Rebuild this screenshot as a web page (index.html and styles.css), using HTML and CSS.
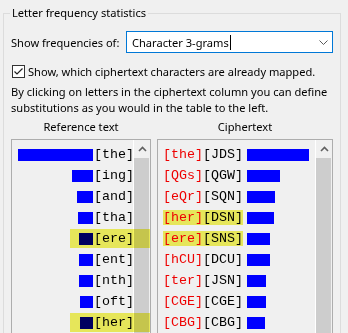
FILE: index.html
```html
<!DOCTYPE html>
<html>
<head>
<meta charset="utf-8">
<link rel="stylesheet" href="styles.css">
</head>
<body>
<fieldset class="group">
  <legend class="group-title">Letter frequency statistics</legend>
  <div class="freq">
    <span class="freq-label">Show frequencies of:</span>
    <div class="combo">
      <span class="combo-value">Character 3-grams</span><span class="caret"></span>
      <svg class="combo-arrow" width="9" height="5" viewBox="0 0 9 5"><polyline points="0.5,0.5 4.5,4.5 8.5,0.5" fill="none" stroke="#5a5a5a" stroke-width="1"/></svg>
    </div>
  </div>
  <div class="check">
    <span class="check-box"><svg width="11" height="11" viewBox="0 0 11 11"><polyline points="1.5,5.5 4,8 9.5,2.5" fill="none" stroke="#222" stroke-width="1.2"/></svg></span>
    <span class="check-label">Show, which ciphertext characters are already mapped.</span>
  </div>
  <p class="desc">By clicking on letters in the ciphertext column you can define substitutions as you would in the table to the left.</p>
  <div class="lists">
    <div class="pane pane-ref">
      <div class="pane-title">Reference text</div>
      <div class="list">
        <div class="rows rows-ref">
          <div class="row"><span class="bar" style="width:75px"></span><span class="txt">[the]</span></div>
          <div class="row"><span class="bar" style="width:21px"></span><span class="txt">[ing]</span></div>
          <div class="row"><span class="bar" style="width:16px"></span><span class="txt">[and]</span></div>
          <div class="row"><span class="bar" style="width:15px"></span><span class="txt">[tha]</span></div>
          <div class="row"><span class="bar" style="width:14px"></span><span class="txt">[ere]</span><span class="mark"></span></div>
          <div class="row"><span class="bar" style="width:14px"></span><span class="txt">[ent]</span></div>
          <div class="row"><span class="bar" style="width:14px"></span><span class="txt">[nth]</span></div>
          <div class="row"><span class="bar" style="width:13px"></span><span class="txt">[oft]</span></div>
          <div class="row"><span class="bar" style="width:13px"></span><span class="txt">[her]</span><span class="mark"></span></div>
        </div>
        <div class="sbar">
          <div class="sbtn"><svg width="9" height="6" viewBox="0 0 9 6"><polyline points="1,5 4.5,1.5 8,5" fill="none" stroke="#606060" stroke-width="1.6"/></svg></div>
          <div class="thumb"></div>
        </div>
      </div>
    </div>
    <div class="pane pane-cipher">
      <div class="pane-title">Ciphertext</div>
      <div class="list">
        <div class="rows rows-cipher">
          <div class="row"><span class="txt"><span class="plain">[the]</span>[JDS]</span><span class="bar" style="width:62px"></span></div>
          <div class="row"><span class="txt"><span class="plain">[QGs]</span>[QGW]</span><span class="bar" style="width:33px"></span></div>
          <div class="row"><span class="txt"><span class="plain">[eQr]</span>[SQN]</span><span class="bar" style="width:28px"></span></div>
          <div class="row"><span class="txt txt-marked"><span class="plain">[her]</span>[DSN]</span><span class="bar" style="width:27px"></span></div>
          <div class="row"><span class="txt txt-marked"><span class="plain">[ere]</span>[SNS]</span><span class="bar" style="width:23px"></span></div>
          <div class="row"><span class="txt"><span class="plain">[hCU]</span>[DCU]</span><span class="bar" style="width:23px"></span></div>
          <div class="row"><span class="txt"><span class="plain">[ter]</span>[JSN]</span><span class="bar" style="width:19px"></span></div>
          <div class="row"><span class="txt"><span class="plain">[CGE]</span>[CGE]</span><span class="bar" style="width:19px"></span></div>
          <div class="row"><span class="txt"><span class="plain">[CBG]</span>[CBG]</span><span class="bar" style="width:18px"></span></div>
        </div>
        <div class="sbar">
          <div class="sbtn"><svg width="9" height="6" viewBox="0 0 9 6"><polyline points="1,5 4.5,1.5 8,5" fill="none" stroke="#606060" stroke-width="1.6"/></svg></div>
          <div class="thumb"></div>
        </div>
      </div>
    </div>
  </div>
</fieldset>
</body>
</html>
```

FILE: styles.css
```css
html, body {
  margin: 0;
}
body {
  background: #f0f0f0;
  width: 348px;
  height: 333px;
  overflow: hidden;
  padding-top: 5px;
  box-sizing: border-box;
  font-family: "Noto Sans", sans-serif;
  font-size: 11.1px;
  color: #000;
}
.group {
  margin: 0 7px 0 3px;
  border: 1px solid #dcdcdc;
  padding: 10px 7px 0 7px;
  min-width: 0;
  height: 400px;
  box-sizing: border-box;
}
.group-title {
  padding: 0 2px;
  margin-left: -1px;
  line-height: 16px;
}
.freq {
  display: flex;
  align-items: center;
  height: 22px;
}
.freq-label,
.check-label {
  white-space: nowrap;
}
.combo {
  margin-left: auto;
  width: 207px;
  height: 22px;
  box-sizing: border-box;
  border: 1px solid #0078d7;
  background: #fff;
  display: flex;
  align-items: center;
  padding-left: 5px;
}
.caret {
  width: 1px;
  height: 15px;
  background: #000;
  margin-left: 1px;
}
.combo-arrow {
  margin-left: auto;
  margin-right: 4px;
}
.check {
  display: flex;
  align-items: center;
  height: 15px;
  margin-top: 11px;
}
.check-box {
  width: 13px;
  height: 13px;
  box-sizing: border-box;
  border: 1px solid #333;
  background: #fff;
  margin-left: 1px;
  margin-right: 3px;
  display: flex;
}
.desc {
  margin: 5px 0 0;
  line-height: 16px;
}
.lists {
  display: flex;
  gap: 6px;
  margin-top: 3px;
}
.pane-ref { width: 140px; }
.pane-cipher { width: 176px; }
.pane-title {
  text-align: center;
  line-height: 16px;
  margin-bottom: 4px;
}
.list {
  display: flex;
  border: 1px solid #adadad;
  height: 220px;
  background: #f0f0f0;
}
.rows {
  flex: 1;
  min-width: 0;
  padding-top: 4px;
}
.row {
  position: relative;
  display: flex;
  align-items: center;
  height: 21px;
  font-family: "Liberation Mono", monospace;
  font-size: 13.33px;
  white-space: pre;
}
.bar {
  height: 12px;
  background: #0000ff;
}
.rows-ref .row {
  justify-content: flex-end;
}
.rows-ref .bar {
  margin-right: 1px;
}
.rows-ref .txt {
  margin-right: -1px;
}
.mark {
  position: absolute;
  left: 58px;
  top: 1px;
  width: 80px;
  height: 19px;
  background: #f5f560;
  mix-blend-mode: multiply;
  z-index: 1;
}
.rows-cipher .row {
  padding-left: 5px;
}
.rows-cipher .txt {
  margin-right: 4px;
}
.txt-marked {
  background: #e6e65a;
}
.plain {
  color: #ee0000;
}
.sbar {
  width: 17px;
  box-sizing: border-box;
  border-left: 1px solid #fff;
  display: flex;
  flex-direction: column;
}
.sbtn {
  height: 17px;
  display: flex;
  align-items: center;
  justify-content: center;
}
.thumb {
  margin: 1px 1px 0 0;
  flex: 1;
  background: #cdcdcd;
}
```
